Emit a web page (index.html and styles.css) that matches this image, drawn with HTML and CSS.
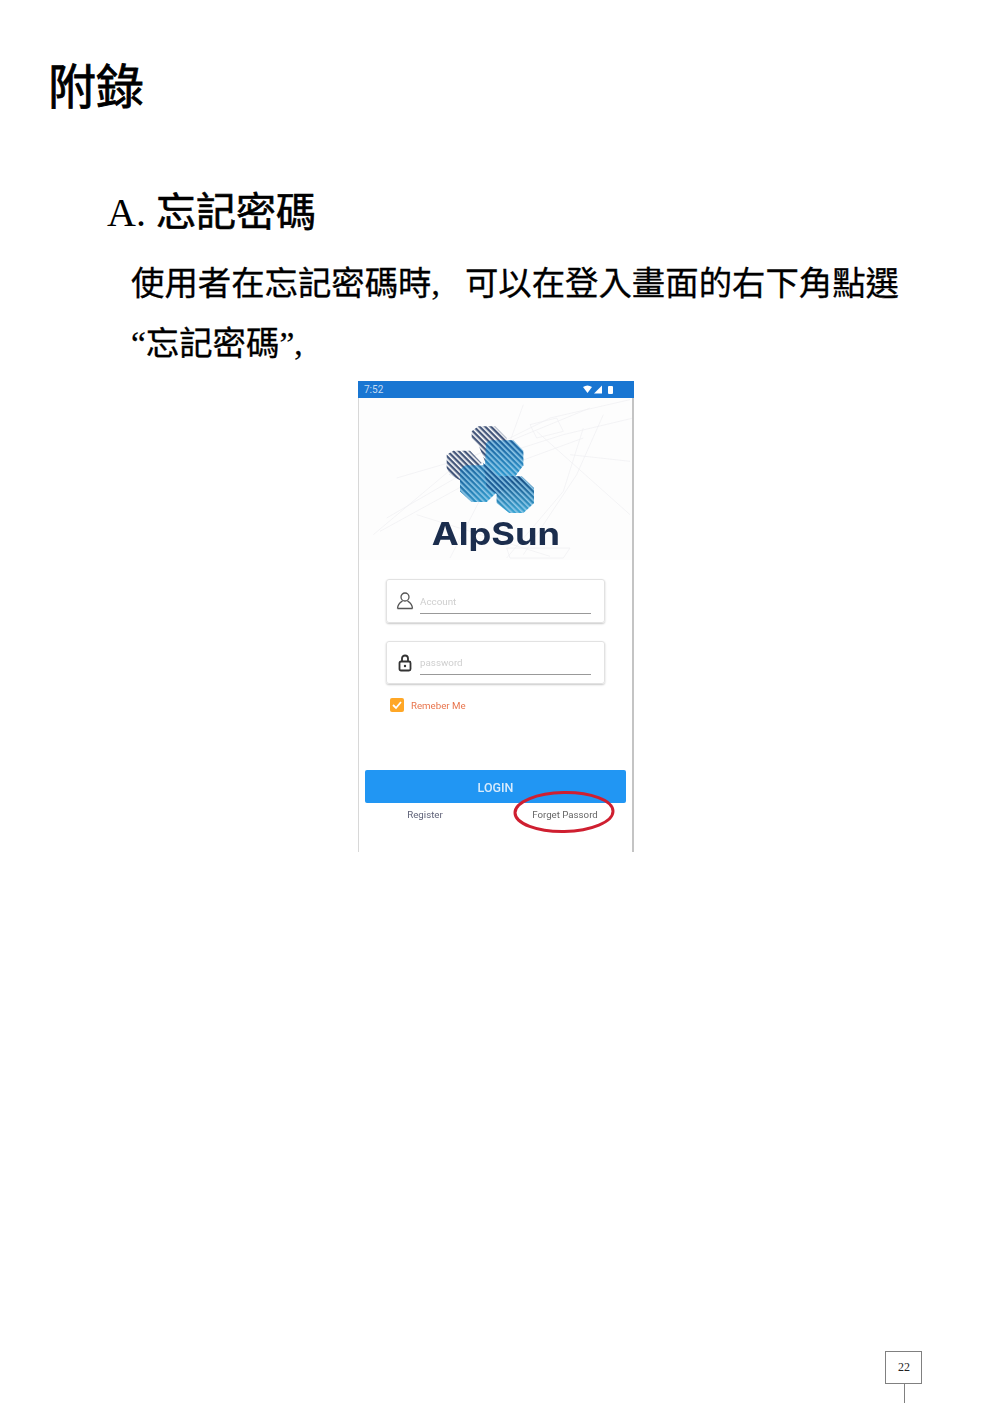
FILE: index.html
```html
<!DOCTYPE html>
<html lang="zh-Hant">
<head>
	<meta charset="UTF-8">
	<meta name="viewport" content="width=device-width, initial-scale=1.0">
	<title>附錄</title>
	<link rel="stylesheet" href="styles.css">
</head>
<body>
	<div class="page">
		<h1 class="title">附錄</h1>
		<h2 class="section">A. <span class="section-name">忘記密碼</span></h2>
		<p class="desc">使用者在忘記密碼時,   可以在登入畫面的右下角點選<br>“忘記密碼”, </p>

		<div class="phone">
			<div class="statusbar">
				<span class="clock">7:52</span>
				<svg class="status-icons" width="30" height="9" viewBox="0 0 30 9">
					<path d="M0 2 Q4.500 -1 9 2 L4.500 8z" fill="#fff"/>
					<path d="M11 8.500 L19 .5 V8.500z" fill="#fff"/>
					<rect x="25" y="1" width="5" height="8" rx="1" fill="#fff"/>
				</svg>
			</div>

			<!-- 背景线条 + logo -->
			<svg class="hero" width="276" height="162" viewBox="24 70 828 486">
				<defs>
					<pattern id="hatch" width="12" height="12" patternUnits="userSpaceOnUse" patternTransform="rotate(45)">
						<rect width="12" height="7" fill="#fff"/>
					</pattern>
					<mask id="stripes" maskUnits="userSpaceOnUse" x="24" y="70" width="828" height="486">
						<rect x="24" y="70" width="828" height="486" fill="url(#hatch)"/>
					</mask>
					<linearGradient id="blueTop" x1="0" y1="0" x2="0" y2="1">
						<stop offset="0" stop-color="#1c5f9c"/>
						<stop offset="1" stop-color="#2f9ad0"/>
					</linearGradient>
					<linearGradient id="blueLeft" x1="0" y1="0" x2="1" y2="1">
						<stop offset="0" stop-color="#1b5c96"/>
						<stop offset="1" stop-color="#35a5d6"/>
					</linearGradient>
					<linearGradient id="blueDark" x1="0" y1="0" x2="0" y2="1">
						<stop offset="0" stop-color="#15497f"/>
						<stop offset="1" stop-color="#3ba6d4"/>
					</linearGradient>
				</defs>
				<rect x="24" y="70" width="828" height="486" fill="#fdfdfd"/>
				<g class="sketch">
					<path d="M70 480 L320 270 L600 130 L840 75"/>
					<path d="M140 310 L380 240 L720 100"/>
					<path d="M110 430 L420 250 L640 180 L850 130"/>
					<path d="M90 470 L400 300 L700 190"/>
					<path d="M300 550 L480 200 L520 90"/>
					<path d="M470 550 L640 350 L700 160"/>
					<path d="M520 540 L680 300 L760 120"/>
					<path d="M560 170 L840 420"/>
					<path d="M200 420 L600 545"/>
					<path d="M660 240 L840 260"/>
					<path d="M540 150 L620 130 L640 170 L560 190z"/>
					<path d="M470 520 L660 520 L640 550 L480 550z"/>
				</g>
				<g>
					<polygon points="408,205 420,197 490,197 520,228 520,272 492,310 440,310 405,270" fill="#8fc8e8"/>
					<polygon points="330,285 345,272 410,272 445,308 445,348 410,382 365,382 330,350" fill="#8fc8e8"/>
					<polygon points="440,320 455,305 515,305 552,340 552,385 520,415 478,415 440,385" fill="#8fc8e8"/>
					<polygon points="400,265 445,305 500,305 445,360 410,340" fill="#8fc8e8"/>
				</g>
				<g mask="url(#stripes)">
					<polygon points="365,170 385,155 435,155 470,190 470,215 405,260 385,210 365,190" fill="#44567a"/>
					<polygon points="290,240 310,228 360,228 395,265 335,320 300,300 290,280" fill="#44567a"/>
					<polygon points="408,205 420,197 490,197 520,228 520,272 492,310 440,310 405,270" fill="url(#blueTop)"/>
					<polygon points="330,285 345,272 410,272 445,308 445,348 410,382 365,382 330,350" fill="url(#blueLeft)"/>
					<polygon points="440,320 455,305 515,305 552,340 552,385 520,415 478,415 440,385" fill="url(#blueDark)"/>
					<polygon points="400,265 445,305 500,305 445,360 410,340" fill="#1b5c96"/>
				</g>
				<text class="wordmark" x="245" y="511" textLength="385" lengthAdjust="spacingAndGlyphs">AlpSun</text>
			</svg>

			<div class="form">
				<div class="field">
					<svg class="field-icon" width="18" height="18" viewBox="0 0 18 18">
						<circle cx="9" cy="5" r="4"/>
						<path d="M1.500 16.500 C2 11 5 10 6.500 9 M16.500 16.500 C16 11 13 10 11.500 9 M1.500 16.500 H16.500"/>
					</svg>
					<span class="field-input">Account</span>
				</div>
				<div class="field field-pass">
					<svg class="field-icon" width="18" height="18" viewBox="0 0 18 18">
						<rect x="3.500" y="7.500" width="11" height="9" rx="1.500"/>
						<path d="M6 7.500 V4.500 C6 .5 12 .5 12 4.500 V7.500"/>
						<circle class="keyhole" cx="9" cy="12" r="1.200"/>
					</svg>
					<span class="field-input">password</span>
				</div>
				<label class="remember">
					<svg width="14" height="14" viewBox="0 0 14 14">
						<rect width="14" height="14" rx="2" fill="#ffa726"/>
						<path d="M3 7 L6 10 L11 4" fill="none" stroke="#fff" stroke-width="1.800"/>
					</svg>
					Remeber Me
				</label>
			</div>

			<div class="login">LOGIN</div>
			<div class="links">
				<span class="link">Register</span>
				<span class="link">Forget Passord</span>
			</div>
			<svg class="circle-mark" width="104" height="44" viewBox="0 0 104 44">
				<ellipse cx="51" cy="22" rx="49" ry="19.500" transform="rotate(-1 51 22)"/>
			</svg>
		</div>

		<div class="pagenum">
			<div class="pagenum-box">22</div>
			<div class="pagenum-line"></div>
		</div>
	</div>
</body>
</html>
```
FILE: styles.css
```css
body{
	margin: 0;
	background: #fff;
	color: #000;
	font-family: "Liberation Serif", "Noto Sans CJK TC", serif;
}
.page{
	height: 1403px;
	display: flex;
	flex-direction: column;
	overflow: hidden;
}
.title{
	margin: 58px 0 0 48px;
	font-size: 48px;
	line-height: 60px;
	font-weight: 400;
	-webkit-text-stroke: .8px #000;
}
.section{
	margin: 65px 0 0 107px;
	font-size: 40px;
	line-height: 60px;
	font-weight: 400;
}
.section-name{
	-webkit-text-stroke: .6px #000;
}
.desc{
	margin: 11px 0 0 131px;
	font-size: 33.400px;
	line-height: 60px;
	white-space: pre;
	-webkit-text-stroke: .3px #000;
}

/* 手机截图 */
.phone{
	position: relative;
	box-sizing: border-box;
	width: 276px;
	height: 471px;
	margin: 7px 0 0 358px;
	padding: 0 2px 0 1px;
	display: flex;
	flex-direction: column;
	font-family: Roboto, sans-serif;
	filter: blur(.5px);
}
/* 左右两条边线盖在内容上面 */
.phone::after{
	content: '';
	position: absolute;
	top: 17px;
	bottom: 0;
	left: 0;
	right: 0;
	border-left: 1px solid #d8d8d8;
	border-right: 2px solid #c4c4c4;
	pointer-events: none;
}
.statusbar{
	flex: none;
	height: 17px;
	margin: 0 -2px 0 -1px;
	padding: 0 21px 0 6px;
	background: #1976d2;
	display: flex;
	align-items: center;
	justify-content: space-between;
}
.clock{
	color: #c6dcf3;
	font-size: 10px;
}
.hero{
	flex: none;
	display: block;
	margin-left: -1px;
}
.sketch path{
	fill: none;
	stroke: #eeeff1;
	stroke-width: 2;
}
.wordmark{
	font-family: Inter, sans-serif;
	font-size: 94px;
	font-weight: 700;
	fill: #1b2d4d;
}

.form{
	flex: none;
	height: 210px;
	padding: 19px 0 0 27px;
	box-sizing: border-box;
}
.field{
	box-sizing: border-box;
	width: 219px;
	height: 44px;
	padding: 0 13px 0 9px;
	border: 1px solid #e2e2e2;
	border-radius: 3px;
	box-shadow: 0 1px 2px rgba(0,0,0,.22);
	display: flex;
	align-items: center;
	gap: 6px;
}
.field-pass{
	height: 43px;
	margin-top: 18px;
}
.field-icon{
	flex: none;
	fill: none;
	stroke: #555;
	stroke-width: 1.300;
}
.field-pass .field-icon{
	stroke: #333;
	stroke-width: 1.800;
}
.keyhole{
	fill: #333;
	stroke: none;
}
.field-input{
	flex: 1;
	box-sizing: border-box;
	height: 24px;
	line-height: 24px;
	margin-top: 1px;
	border-bottom: 1px solid #999;
	color: #cfcfcf;
	font-size: 9.800px;
}
.remember{
	display: flex;
	align-items: center;
	gap: 7px;
	margin: 14px 0 0 4px;
	color: #e8744c;
	font-size: 9.700px;
}

.login{
	flex: none;
	height: 33px;
	margin: 0 6px;
	background: #2196f3;
	border-radius: 2px;
	color: #d8ebfc;
	font-size: 12.500px;
	font-weight: 500;
	line-height: 35px;
	text-align: center;
}
.links{
	display: flex;
	margin-top: 4px;
}
.link{
	flex: none;
	width: 132px;
	color: #5f6278;
	font-size: 9.700px;
	line-height: 15px;
	text-align: center;
}
.link:last-child{
	margin-left: 8px;
	color: #666;
}
.circle-mark{
	position: absolute;
	left: 155px;
	top: 409px;
	fill: none;
	stroke: #cf1f30;
	stroke-width: 3;
}

/* 页码 */
.pagenum{
	margin: auto 70px 0 auto;
	width: 37px;
}
.pagenum-box{
	box-sizing: border-box;
	height: 33px;
	padding-left: 1px;
	border: 1px solid #808080;
	font-size: 12px;
	line-height: 30px;
	text-align: center;
	color: #222;
}
.pagenum-line{
	width: 1px;
	height: 19px;
	margin-left: 19px;
	background: #808080;
}
```
